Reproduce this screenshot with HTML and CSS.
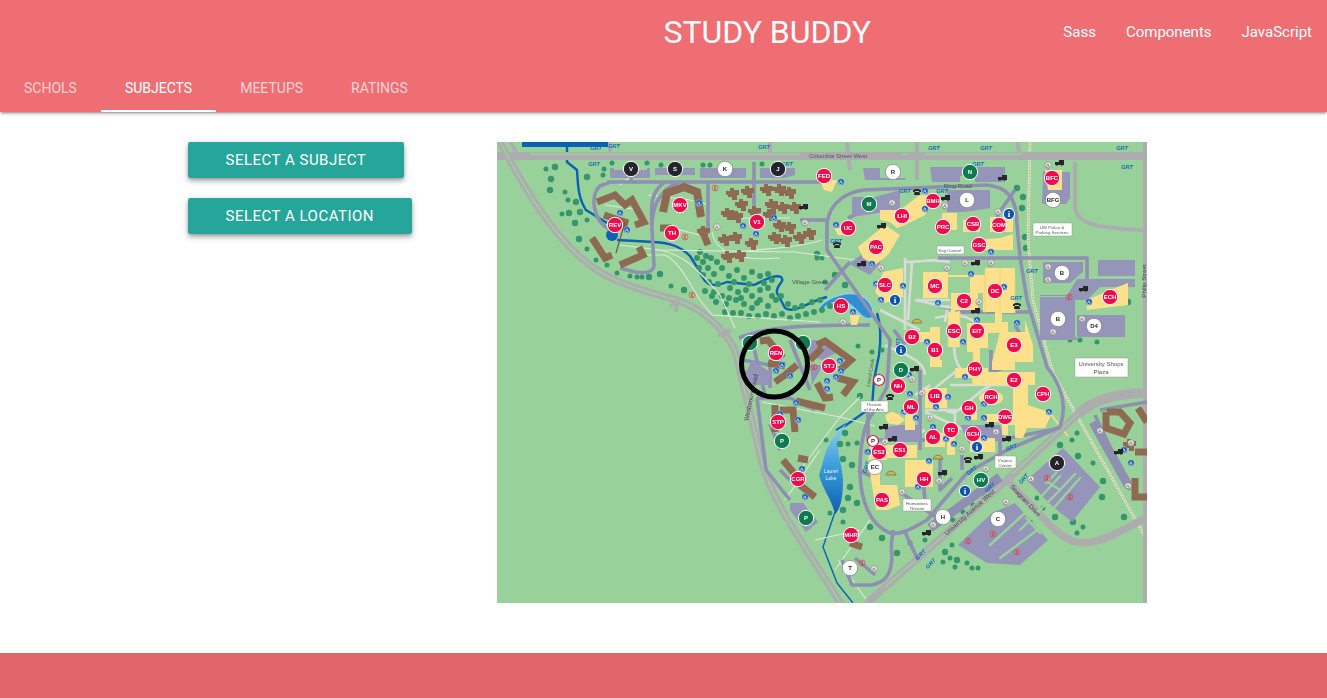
FILE: index.html
```html
<!DOCTYPE html>
<html lang="en">
<head>
<meta charset="utf-8">
<title>Study Buddy</title>
<link rel="stylesheet" href="styles.css">
</head>
<body>
<header class="topbar">
  <div class="brand-row">
    <div class="spacer"></div>
    <div class="brand-side">
      <a class="brand">STUDY BUDDY</a>
      <nav class="links"><a>Sass</a><a>Components</a><a>JavaScript</a></nav>
    </div>
  </div>
  <div class="tabs">
    <a class="tab">SCHOLS</a>
    <a class="tab active">SUBJECTS</a>
    <a class="tab">MEETUPS</a>
    <a class="tab">RATINGS</a>
  </div>
</header>
<main class="content">
  <div class="actions">
    <a class="btn">SELECT A SUBJECT</a>
    <a class="btn">SELECT A LOCATION</a>
  </div>
  <svg class="map" viewBox="497 142 650 461" width="650" height="461" role="img" aria-label="Campus map">
    <defs>
      <linearGradient id="lake" x1="0" y1="0" x2="0" y2="1"><stop offset="0" stop-color="#8ed0ee"/><stop offset=".45" stop-color="#3f9fdc"/><stop offset="1" stop-color="#0b5fb0"/></linearGradient>
      <g id="w"><circle r="3.2" class="w-bg"/><path class="w-g" d="M-.3-1.6V.5H1L1.5 1.7M-.3-.6H1M-.9-.2A1.4 1.4 0 1 0 .9 1.4"/></g>
      <g id="a"><circle r="3.2" class="a-bg"/><path class="a-g" d="M-.3-1.6V.5H1L1.5 1.7M-.3-.6H1M-.9-.2A1.4 1.4 0 1 0 .9 1.4"/></g>
      <path id="t" class="blk" d="M-5 2V-1H-1V-3H4V2H3A1.2 1.2 0 0 1 .8 2H-2A1.2 1.2 0 0 1-4.2 2Z"/>
      <path id="f" class="blk" d="M-4-1.5C-3-3.5 3-3.5 4-1.5V0H2V-1H-2V0H-4ZM-2.5 0H2.5L3 3H-3Z"/>
      <g id="p"><circle r="3" class="p-c"/><path class="p-g" d="M1-1.8C-.8-1.6-.9 1.5 1 1.8"/></g>
      <path id="o" class="dome" d="M-5 2C-4-3 4-3 5 2Z"/>
      <path id="h" class="brown" d="M-7-3H-3V-6H1V-4H6V1H4V6H-1V3H-5V1H-7Z"/>
    </defs>

    <rect class="grass" x="497" y="142" width="650" height="461"/>

    <!-- water -->
    <rect class="water" x="522" y="142" width="88" height="5"/>
    <path class="river" d="M567 147V162L577 170C578 185 578 198 586 210L607 223"/>
    <circle class="water" cx="612" cy="235" r="6"/>
    <path class="river" d="M617 240L654 242C670 243 680 246 690 256L700 272C705 285 712 288 727 282L754 285C765 280 775 274 781 277C786 282 775 285 777 293L785 308C795 314 805 303 827 297"/>
    <path class="pond" d="M820 306C830 296 850 290 862 296C872 302 875 312 872 318C862 322 858 308 846 302C838 300 828 303 822 310Z"/>
    <path class="river" d="M877 313C881 325 881 340 879 355L874 380L872 407L842 428"/>
    <path class="lakeline" d="M846 424L836 430"/>
    <path class="lake" d="M846 424C832 436 826 448 823 462L819 475C823 490 832 500 835 514C842 508 843 492 843 480C842 462 835 450 840 438Z"/>
    <path class="river thin" d="M835 512L823 547L837 583L853 603"/>

    <!-- trees -->
    <path class="tree t1" d="M555 167h0M551 179h0M550 190h0M576 202h0M569 213h0M580 212h0M575 223h0M587 177h0M579 239h0M649 277h0M660 274h0M684 290h0M817 254h0M1128 302h0M1023 197h0M1017 188h0M1022 208h0M1025 237h0M1026 248h0M845 433h0M840 444h0M843 459h0M852 465h0M850 487h0M848 498h0M857 503h0M870 527h0M882 538h0M897 553h0M843 510h0M945 552h0M957 560h0M1060 445h0M1103 481h0M1102 497h0M1078 456h0M1055 517h0M1073 522h0M1124 517h0M860 396h0M835 275h0M845 285h0"/>
    <path class="tree t2" d="M546 169h0M565 192h0M568 200h0M562 214h0M587 220h0M587 249h0M596 260h0M607 265h0M617 273h0M630 276h0M637 277h0M642 277h0M603 175h0M604 169h0M612 163h0M661 165h0M703 165h0M710 165h0M762 164h0M647 163h0M671 286h0M817 258h0M822 258h0M848 444h0M857 443h0M826 440h0M830 513h0M843 522h0M910 543h0M925 540h0M950 558h0M943 562h0M955 567h0M967 563h0M972 568h0M978 568h0M952 545h0M953 520h0M963 512h0M973 505h0M985 497h0M997 490h0M1072 440h0M1077 433h0M1093 463h0M1077 533h0M1083 527h0M1037 498h0M1043 508h0M1030 521h0M1070 340h0M1080 340h0M1097 342h0M825 282h0M858 346h0M872 352h0M882 350h0"/>
    <path class="tree t3" d="M700 252h0M706 256h0M697 258h0M703 262h0M711 258h0M717 262h0M699 268h0M708 268h0M714 274h0M722 268h0M729 276h0M737 270h0M744 278h0M752 272h0M760 276h0M768 274h0M772 280h0M703 275h0M709 282h0M718 284h0M705 291h0M714 292h0M722 296h0M730 288h0M738 292h0M746 290h0M752 296h0M760 290h0M768 288h0M776 300h0M716 302h0M726 304h0M736 300h0M744 304h0M752 308h0M760 300h0M768 306h0M781 296h0M733 313h0M741 313h0M749 316h0M758 316h0M766 314h0M774 316h0M782 314h0M790 318h0M798 316h0M806 314h0M814 312h0M822 310h0M830 306h0M802 306h0M812 302h0M820 300h0M729 298h0M741 298h0M757 303h0M772 296h0M788 304h0M795 308h0M725 312h0M712 296h0M734 282h0M749 284h0M764 283h0"/>

    <!-- walks -->
    <path class="walk" d="M620 185L640 170M605 205L640 210M620 245L660 250C680 255 690 260 720 295L735 328M655 250L795 252L870 262M712 232C715 250 735 262 780 258M740 252C760 248 790 250 822 240M728 218H790M648 195L690 200L710 205M660 225L700 235M640 255H665C680 262 690 285 700 300L712 315L820 322M762 402L840 417M840 417L800 470M840 417L860 397M840 417L875 426M820 450L785 500M838 560L868 602M860 530L815 540M870 520L835 570"/>
    <path class="plaza" d="M905 258V330M905 262C925 262 930 258 950 262M935 318C950 315 965 310 985 330M915 300L960 310C955 330 950 355 960 368L935 388M880 310L920 330M930 385L915 395M950 385H1010M925 412L965 430M950 430V445M945 410C960 420 960 400 1000 380M885 345C905 355 925 360 925 375M912 262L908 320M918 300L950 300M948 305L945 322M925 410H955V432M905 440L925 430M1004 310L1020 306"/>

    <!-- rail -->
    <path class="rail-bg" d="M1030 142L1028 240L1033 300L1053 373L1085 430L1147 540"/>
    <path class="rail" d="M1030 142L1028 240L1033 300L1053 373L1085 430L1147 540"/>
    <path class="yellow-walk" d="M1049 412L1068 436"/>

    <!-- roads -->
    <path class="road mid" d="M497 156H1147"/>
    <path class="road" d="M510 142L521 160M770 142V156M610 142V156M847 142L850 170M917 142V180M1017 142L1020 156M1145 142V603"/>
    <path class="med" d="M530 154H800M902 154H908M925 154H1023"/>
    <path class="road wide" d="M500 142C520 180 545 225 580 257C600 275 620 285 677 300C700 308 722 325 735 350L745 392L762 462C770 495 790 525 842 605"/>
    <path class="med" d="M500 142C520 180 545 225 580 257C600 275 620 285 677 300C700 308 722 325 735 350L745 392L762 462C770 495 790 525 842 605"/>
    <path class="road wide" d="M867 603L1007 480L1078 414M1007 480L1050 525C1075 550 1090 550 1147 517"/>
    <path class="road fat" d="M1078 414C1098 396 1125 393 1147 393"/>
    <path class="med" d="M885 587L1000 486M1012 474L1078 414"/>
    <path class="road" d="M670 306L677 302L676 312M722 338L730 330L718 336"/>
    <path class="road" d="M1075 162V205C1075 222 1090 228 1143 230"/>

    <!-- lots and purple roads -->
    <path class="lane" d="M827 223C830 200 850 192 863 190L987 185C1005 187 1017 195 1017 225L1020 257L1027 300L1047 367C1065 390 1066 410 1060 427L1007 450L967 473L927 520C910 530 900 535 890 533C870 525 860 500 860 470C860 440 866 420 873 413L887 387L890 340L853 287L827 250Z"/>
    <path class="lane" d="M610 182L600 186C590 195 592 220 610 230M607 182H828M665 182C650 192 651 205 652 230L654 265C654 272 645 274 635 272L620 268M679 182C660 190 651 205 652 230M631 163V182M708 182V228M754 162V212M800 220H828M938 258H1087V280M850 262L825 290M870 208L848 218M894 330L905 345M858 470L880 480M923 482L925 500M900 492L940 520M864 452H895M905 440H925M960 312H1030M1015 325L1021 336M1003 368L991 372V350M1015 190L998 214V220H1010M1060 428L1000 440V462M868 408V440H895M920 370V450M940 458V490L952 478M962 455V470M1095 415L1130 490M1100 410L1147 402"/>
    <path class="lane fat" d="M930 528L1000 477M1093 422L1128 485"/>
    <path class="lane" d="M757 398H790L815 410M757 398L766 470L790 500M770 424L780 450M780 470L790 480M739 338C770 325 820 325 870 325M752 340L765 395M790 340L810 390M742 360L770 365L770 388M762 372H745"/>
    <path class="lane" d="M842 560L852 585H872C885 582 892 575 892 555C890 545 893 535 893 530M855 558L875 575M905 532L918 560"/>
    <path class="lot" d="M610 168H614V170H647V168H650V178H610ZM655 168H695V175H655ZM700 168H746V178H700ZM760 168H795V175L785 178H760ZM863 168H880V178H905V168V180H865ZM930 167H1005V182H975V176H960V182H932ZM947 190H990V208L965 212H947ZM852 197H875L900 190V217H885V212L852 217ZM1043 172L1049 168V190H1062V172H1070V198L1066 204H1042ZM1043 262H1083V272L1070 283H1043ZM1098 260H1135V276H1098ZM1077 279H1135V287H1100L1087 300H1075L1070 296H1040V337H1077V315H1125V337H1077V340H1040ZM1040 295H1075V340H1040ZM1080 318H1124V336H1080ZM790 503H803L818 522L806 532L790 510ZM1027 480L1063 448L1100 487L1072 522L1050 504ZM958 545L992 513L1015 503L1048 540L1020 565L987 563ZM849 264L867 250L881 262L870 275ZM935 308L950 310L975 312H1032L1032 312ZM812 340L830 342L838 352L822 360L808 355ZM810 365H823L812 385ZM746 372L752 360L770 372V385H745ZM900 425H920V442H885V427ZM960 425H1000L1005 440L970 445ZM1040 297H1075V339H1040Z"/>
    <path class="strip" d="M1046 483L1056 473M1020 530L1056 494L1075 474M1052 510L1080 478M1048 482L1060 490M1000 558L1040 528M990 545L1026 512M1040 533L1026 518M1040 498L1060 476M978 520L1000 505"/>

    <!-- yellow buildings -->
    <path class="yel" d="M820 180H837L832 192L824 190ZM880 210H900L920 195H935L925 215L905 225L897 228L890 222L880 220ZM858 247L885 225L900 235L888 255L875 265L863 258ZM875 292L883 272L903 268V297L885 303ZM942 213H957V230H942ZM963 220H980V232H963ZM990 217H1013V232H990ZM973 250V240L1000 238L1013 234V250ZM1045 170H1062V190H1048ZM1087 300L1110 290L1128 283V305L1087 310ZM923 272H948V275H985V268H1015V277H1015V313H1002V322H1008V332L995 333H988V348H980V368H988V372H1035V385H1028V405L1052 413L1045 428H1027L1023 438H1015V425H1008V435H1002V422H985V414H1013V385H972V378H955L955 368H973V352H967V323H995L995 312H983V293H978V310H955V312H960V347H948V312H951V293H970V277H948V298H923ZM1000 332H1025V320L1033 345V362H1015V370H992V362H992Z"/>
    <path class="yel" d="M907 332H930V327H940V360H942V367H930V342H907ZM925 388H947V408H925ZM925 433H945V447H925ZM947 433H955V455H947ZM965 412H977V420H965ZM970 438H995V452H970ZM905 405H915V430H905ZM885 415L898 414L905 420L898 425L888 423ZM870 445H917V458H887V460H868ZM905 460H933V487H905V487ZM870 473H880V485H897L900 505L888 510H876ZM834 228H852L845 235H838ZM850 315H860L857 325H851Z"/>
    <ellipse class="yel" cx="991" cy="398" rx="12" ry="7"/>
    <circle class="yel" cx="892" cy="418" r="6"/>
    <path class="yel-edge" d="M985 268V313M1000 268V313M1015 277V313M948 312V347M960 312V347M973 352V385"/>

    <!-- brown buildings -->
    <path class="bline" d="M597 202L615 195L625 205L632 200L644 222L635 225M604 215L625 222L623 230M592 238L605 258L612 255M620 265L643 255L639 247M660 228H672M701 228L708 245"/>
    <path class="bline big" d="M663 212L667 193L684 187L697 192L701 217"/>
    <path class="bline" d="M760 341L768 340L783 358M768 363L785 366M797 365L785 375L775 382M817 345L825 341L851 360L840 370M810 360L822 348M817 383L825 398L833 397M838 378L853 382L843 395M796 401L825 408M775 405V432M780 410H793L795 432M798 458L808 460M783 460L797 477M800 485L815 497M850 543L862 547"/>
    <path class="bline" d="M1107 412H1120L1130 423L1124 434L1106 428V412M1138 408L1147 422M1135 478V497H1147M1135 452H1147"/>
    <path class="bthin" d="M625 222L616 253"/>
    <use href="#h" x="733" y="194"/><use href="#h" x="748" y="192"/><use href="#h" x="742" y="205"/><use href="#h" x="728" y="214"/><use href="#h" x="737" y="217"/><use href="#h" x="704" y="232"/><use href="#h" x="725" y="240"/><use href="#h" x="736" y="238"/><use href="#h" x="728" y="257"/><use href="#h" x="740" y="256"/><use href="#h" x="752" y="244"/><use href="#h" x="767" y="190"/><use href="#h" x="780" y="190"/><use href="#h" x="790" y="193"/><use href="#h" x="772" y="205"/><use href="#h" x="783" y="208"/><use href="#h" x="795" y="208"/><use href="#h" x="780" y="226"/><use href="#h" x="790" y="228"/><use href="#h" x="775" y="238"/><use href="#h" x="786" y="241"/><use href="#h" x="800" y="238"/><use href="#h" x="770" y="215"/><use href="#h" x="755" y="212"/><use href="#h" x="810" y="234"/>
    <use href="#h" x="1130" y="445"/>

    <!-- small icons -->
    <g class="icons">
      <use href="#w" x="699" y="203"/><use href="#w" x="620" y="213"/><use href="#w" x="627" y="230"/><use href="#w" x="743" y="226"/><use href="#w" x="756" y="234"/><use href="#w" x="774" y="218"/><use href="#w" x="841" y="182"/><use href="#w" x="925" y="191"/><use href="#w" x="925" y="209"/><use href="#w" x="836" y="225"/><use href="#w" x="872" y="264"/><use href="#w" x="876" y="284"/><use href="#w" x="903" y="286"/><use href="#w" x="881" y="300"/><use href="#w" x="938" y="303"/><use href="#w" x="971" y="274"/><use href="#w" x="1004" y="287"/><use href="#w" x="991" y="252"/><use href="#w" x="1089" y="302"/><use href="#w" x="853" y="312"/><use href="#w" x="1017" y="323"/><use href="#w" x="977" y="320"/><use href="#w" x="963" y="342"/><use href="#w" x="927" y="342"/><use href="#w" x="840" y="361"/><use href="#w" x="841" y="371"/><use href="#w" x="965" y="377"/><use href="#w" x="836" y="377"/><use href="#w" x="827" y="381"/><use href="#w" x="827" y="389"/><use href="#w" x="796" y="403"/><use href="#w" x="780" y="414"/><use href="#w" x="798" y="420"/><use href="#w" x="802" y="469"/><use href="#w" x="805" y="497"/><use href="#w" x="910" y="394"/><use href="#w" x="936" y="407"/><use href="#w" x="948" y="397"/><use href="#w" x="904" y="412"/><use href="#w" x="916" y="418"/><use href="#w" x="965" y="405"/><use href="#w" x="984" y="404"/><use href="#w" x="984" y="418"/><use href="#w" x="968" y="418"/><use href="#w" x="933" y="427"/><use href="#w" x="946" y="439"/><use href="#w" x="954" y="444"/><use href="#w" x="984" y="438"/><use href="#w" x="868" y="452"/><use href="#w" x="929" y="461"/><use href="#w" x="918" y="487"/><use href="#w" x="1049" y="412"/><use href="#w" x="782" y="365"/><use href="#w" x="776" y="371"/><use href="#w" x="790" y="376"/><use href="#w" x="909" y="375"/><use href="#w" x="1124" y="450"/><use href="#w" x="1131" y="463"/>
      <use href="#a" x="717" y="227"/><use href="#a" x="805" y="223"/><use href="#a" x="892" y="203"/><use href="#a" x="945" y="206"/><use href="#a" x="998" y="212"/><use href="#a" x="1048" y="165"/><use href="#a" x="881" y="268"/><use href="#a" x="947" y="268"/><use href="#a" x="965" y="263"/><use href="#a" x="991" y="263"/><use href="#a" x="1048" y="267"/><use href="#a" x="1048" y="280"/><use href="#a" x="979" y="302"/><use href="#a" x="1082" y="319"/><use href="#a" x="1053" y="332"/><use href="#a" x="843" y="322"/><use href="#a" x="912" y="379"/><use href="#a" x="922" y="393"/><use href="#a" x="930" y="418"/><use href="#a" x="885" y="442"/><use href="#a" x="962" y="449"/><use href="#a" x="996" y="432"/><use href="#a" x="939" y="481"/><use href="#a" x="902" y="492"/><use href="#a" x="986" y="469"/><use href="#a" x="1006" y="502"/><use href="#a" x="1031" y="479"/><use href="#a" x="933" y="525"/><use href="#a" x="874" y="569"/><use href="#a" x="1100" y="431"/><use href="#a" x="1131" y="443"/><use href="#a" x="1128" y="486"/>
      <use href="#t" x="1060" y="163"/><use href="#t" x="1003" y="178"/><use href="#t" x="946" y="198"/><use href="#t" x="882" y="226"/><use href="#t" x="862" y="264"/><use href="#t" x="976" y="263"/><use href="#t" x="1084" y="289"/><use href="#t" x="976" y="311"/><use href="#t" x="915" y="369"/><use href="#t" x="804" y="207"/><use href="#t" x="884" y="427"/><use href="#t" x="893" y="439"/><use href="#t" x="943" y="473"/><use href="#t" x="927" y="533"/><use href="#t" x="979" y="457"/><use href="#t" x="990" y="425"/><use href="#t" x="1007" y="439"/><use href="#t" x="1119" y="452"/>
      <use href="#f" x="917" y="192"/><use href="#f" x="837" y="245"/><use href="#f" x="1017" y="306"/><use href="#f" x="890" y="397"/><use href="#f" x="968" y="460"/>
      <use href="#p" x="715" y="188"/><use href="#p" x="685" y="237"/><use href="#p" x="692" y="295"/><use href="#p" x="814" y="367"/><use href="#p" x="1069" y="297"/><use href="#p" x="1047" y="478"/><use href="#p" x="1070" y="497"/><use href="#p" x="993" y="534"/><use href="#p" x="968" y="541"/><use href="#p" x="1017" y="552"/><use href="#p" x="862" y="563"/>
      <use href="#o" x="917" y="321"/><use href="#o" x="938" y="457"/><use href="#o" x="891" y="473"/>
    </g>

    <!-- notices -->
    <rect class="note" x="1033" y="223" width="39" height="13"/>
    <rect class="note" x="937" y="246" width="27" height="8"/>
    <rect class="note" x="1075" y="358" width="53" height="19"/>
    <rect class="note" x="861" y="401" width="27" height="11"/>
    <rect class="note" x="995" y="456" width="21" height="12"/>
    <rect class="note" x="903" y="499" width="28" height="12"/>
    <g class="lbl">
      <text x="1052" y="229">UW Police &amp;</text><text x="1052" y="234">Parking Services</text>
      <text x="950" y="252">Key Control</text>
      <text class="lg" x="1101" y="366">University Shops</text><text class="lg" x="1101" y="374">Plaza</text>
      <text x="874" y="406">Theatre</text><text x="874" y="411">of the Arts</text>
      <text x="1005" y="462">Visitors</text><text x="1005" y="467">Centre</text>
      <text x="917" y="505">Humanities</text><text x="917" y="510">Theatre</text>
    </g>
    <g class="names">
      <text x="810" y="284">Village Green</text>
      <text x="838" y="158">Columbia Street West</text>
      <text x="958" y="188">Ring Road</text>
      <text class="sm wh" x="831" y="473">Laurel</text><text class="sm wh" x="831" y="480">Lake</text>
      <text transform="translate(1146 281) rotate(-90)" class="ln">Philip Street</text>
      <text transform="translate(753 398) rotate(-78)" class="ln">Westmount Road</text>
      <text transform="translate(971 514) rotate(-42)" class="ln">University Avenue West</text>
      <text transform="translate(1024 502) rotate(47)" class="ln">Seagram Drive</text>
      <text transform="translate(872 373) rotate(-80)" class="sm">Laurel Creek</text>
    </g>
    <g class="grt">
      <text x="596" y="150">GRT</text><text x="764" y="149">GRT</text><text x="594" y="166">GRT</text><text x="787" y="166">GRT</text><text x="614" y="148">GRT</text><text x="934" y="150">GRT</text><text x="986" y="150">GRT</text><text x="1122" y="150">GRT</text><text x="978" y="166">GRT</text><text x="1127" y="169">GRT</text><text x="905" y="193">GRT</text><text x="942" y="193">GRT</text><text x="836" y="243">GRT</text><text x="1032" y="273">GRT</text><text x="1016" y="300">GRT</text>
      <text transform="translate(900 344) rotate(-90)">GRT</text><text transform="translate(868 468) rotate(-70)">GRT</text><text transform="translate(973 472) rotate(-40)">GRT</text><text transform="translate(1012 449) rotate(-20)">GRT</text><text transform="translate(991 489) rotate(-40)">GRT</text><text transform="translate(1025 480) rotate(-50)">GRT</text><text transform="translate(922 556) rotate(-45)">GRT</text><text transform="translate(932 565) rotate(-45)">GRT</text>
    </g>

    <!-- pins -->
    <g class="pins red">
      <circle cx="615" cy="225" r="7.3"/><text x="615" y="227">REV</text>
      <circle cx="680" cy="205" r="7.3"/><text x="680" y="207">MKV</text>
      <circle cx="672" cy="233" r="7.3"/><text x="672" y="235">TH</text>
      <circle cx="757" cy="222" r="7.3"/><text x="757" y="224">V1</text>
      <circle cx="824" cy="176" r="7.3"/><text x="824" y="178">FED</text>
      <circle cx="848" cy="228" r="7.3"/><text x="848" y="230">UC</text>
      <circle cx="933" cy="201" r="7.3"/><text x="933" y="203">BMH</text>
      <circle cx="902" cy="216" r="7.3"/><text x="902" y="218">LHI</text>
      <circle cx="876" cy="247" r="7.3"/><text x="876" y="249">PAC</text>
      <circle cx="943" cy="227" r="7.3"/><text x="943" y="229">PRC</text>
      <circle cx="973" cy="224" r="7.3"/><text x="973" y="226">CSB</text>
      <circle cx="999" cy="225" r="7.3"/><text x="999" y="227">COM</text>
      <circle cx="979" cy="245" r="7.3"/><text x="979" y="247">GSC</text>
      <circle cx="885" cy="285" r="7.3"/><text x="885" y="287">SLC</text>
      <circle cx="935" cy="286" r="7.3"/><text x="935" y="288">MC</text>
      <circle cx="995" cy="291" r="7.3"/><text x="995" y="293">DC</text>
      <circle cx="964" cy="301" r="7.3"/><text x="964" y="303">C2</text>
      <circle cx="841" cy="306" r="7.3"/><text x="841" y="308">HS</text>
      <circle cx="954" cy="331" r="7.3"/><text x="954" y="333">ESC</text>
      <circle cx="977" cy="331" r="7.3"/><text x="977" y="333">EIT</text>
      <circle cx="912" cy="337" r="7.3"/><text x="912" y="339">B2</text>
      <circle cx="935" cy="350" r="7.3"/><text x="935" y="352">B1</text>
      <circle cx="1014" cy="345" r="7.3"/><text x="1014" y="347">E3</text>
      <circle cx="776" cy="353" r="7.3"/><text x="776" y="355">REN</text>
      <circle cx="829" cy="366" r="7.3"/><text x="829" y="368">STJ</text>
      <circle cx="975" cy="369" r="7.3"/><text x="975" y="371">PHY</text>
      <circle cx="1014" cy="380" r="7.3"/><text x="1014" y="382">E2</text>
      <circle cx="898" cy="386" r="7.3"/><text x="898" y="388">NH</text>
      <circle cx="935" cy="396" r="7.3"/><text x="935" y="398">LIB</text>
      <circle cx="991" cy="397" r="7.3"/><text x="991" y="399">RCH</text>
      <circle cx="1043" cy="394" r="7.3"/><text x="1043" y="396">CPH</text>
      <circle cx="911" cy="407" r="7.3"/><text x="911" y="409">ML</text>
      <circle cx="969" cy="408" r="7.3"/><text x="969" y="410">GH</text>
      <circle cx="1005" cy="417" r="7.3"/><text x="1005" y="419">DWE</text>
      <circle cx="778" cy="422" r="7.3"/><text x="778" y="424">STP</text>
      <circle cx="951" cy="430" r="7.3"/><text x="951" y="432">TC</text>
      <circle cx="933" cy="437" r="7.3"/><text x="933" y="439">AL</text>
      <circle cx="973" cy="434" r="7.3"/><text x="973" y="436">SCH</text>
      <circle cx="879" cy="452" r="7.3"/><text x="879" y="454">ES2</text>
      <circle cx="900" cy="450" r="7.3"/><text x="900" y="452">ES1</text>
      <circle cx="924" cy="479" r="7.3"/><text x="924" y="481">HH</text>
      <circle cx="798" cy="479" r="7.3"/><text x="798" y="481">CGR</text>
      <circle cx="882" cy="500" r="7.3"/><text x="882" y="502">PAS</text>
      <circle cx="851" cy="535" r="7.3"/><text x="851" y="537">MHR</text>
      <circle cx="1052" cy="178" r="7.3"/><text x="1052" y="180">BFC</text>
      <circle cx="1110" cy="297" r="7.3"/><text x="1110" y="299">ECH</text>
    </g>
    <g class="pins green">
      <circle cx="750" cy="343" r="7"/><circle cx="803" cy="343" r="7"/>
      <circle cx="970" cy="172" r="7.3"/><text x="970" y="174">N</text>
      <circle cx="869" cy="204" r="7.3"/><text x="869" y="206">M</text>
      <circle cx="901" cy="370" r="7.3"/><text x="901" y="372">D</text>
      <circle cx="782" cy="441" r="7.3"/><text x="782" y="443">P</text>
      <circle cx="806" cy="518" r="7.3"/><text x="806" y="520">P</text>
      <circle cx="981" cy="480" r="7.3"/><text x="981" y="482">HV</text>
    </g>
    <g class="pins white">
      <circle cx="893" cy="172" r="7.3"/><text x="893" y="174">R</text>
      <circle cx="967" cy="200" r="7.3"/><text x="967" y="202">L</text>
      <circle cx="725" cy="169" r="7.3"/><text x="725" y="171">K</text>
      <circle cx="1053" cy="200" r="7.3"/><text x="1053" y="202">BFG</text>
      <circle cx="1062" cy="273" r="7.3"/><text x="1062" y="275">B</text>
      <circle cx="1058" cy="319" r="7.3"/><text x="1058" y="321">B</text>
      <circle cx="1094" cy="326" r="7.3"/><text x="1094" y="328">D4</text>
      <circle cx="875" cy="467" r="7.3"/><text x="875" y="469">EC</text>
      <circle cx="943" cy="517" r="7.3"/><text x="943" y="519">H</text>
      <circle cx="998" cy="519" r="7.3"/><text x="998" y="521">C</text>
      <circle cx="850" cy="568" r="7.3"/><text x="850" y="570">T</text>
    </g>
    <g class="pins ringed">
      <circle cx="879" cy="380" r="5.5"/><text x="879" y="382">P</text>
      <circle cx="873" cy="441" r="5.5"/><text x="873" y="443">P</text>
    </g>
    <g class="pins black">
      <circle cx="631" cy="169" r="7.3"/><text x="631" y="171">V</text>
      <circle cx="675" cy="169" r="7.3"/><text x="675" y="171">S</text>
      <circle cx="778" cy="169" r="7.3"/><text x="778" y="171">J</text>
      <circle cx="1057" cy="463" r="7.3"/><text x="1057" y="465">A</text>
    </g>
    <g class="pins info">
      <circle cx="1009" cy="214" r="6"/><text x="1009" y="217">i</text>
      <circle cx="895" cy="300" r="6"/><text x="895" y="303">i</text>
      <circle cx="901" cy="350" r="6"/><text x="901" y="353">i</text>
      <circle cx="977" cy="447" r="4.5"/><text x="977" y="450">i</text>
      <circle cx="965" cy="491" r="4.5"/><text x="965" y="494">i</text>
    </g>
    <circle class="ring" cx="774.5" cy="364" r="33"/>
  </svg>
</main>
<footer class="footer"></footer>
</body>
</html>
```

FILE: styles.css
```css
* { box-sizing: border-box; }
html { font-size: 15px; }
body { margin: 0; font-family: Roboto, "Liberation Sans", sans-serif; color: #fff; background: #fff; }
a { color: inherit; text-decoration: none; }

.topbar { background: #ee6e73; box-shadow: 0 2px 2px 0 rgba(0,0,0,.14), 0 3px 1px -2px rgba(0,0,0,.12), 0 1px 5px 0 rgba(0,0,0,.2); position: relative; z-index: 1; }
.brand-row { display: grid; grid-template-columns: 1fr 1fr; height: 64px; }
.brand-side { display: flex; justify-content: space-between; align-items: center; }
.brand { font-size: 32px; line-height: 64px; }
.links { display: flex; }
.links a { padding: 0 15px; line-height: 64px; font-size: 15px; }

.tabs { display: flex; height: 48px; }
.tab { padding: 0 24px; line-height: 48px; font-size: 14px; color: rgba(255,255,255,.7); }
.tab.active { color: #fff; border-bottom: 2px solid #fff; }

.content { display: flex; align-items: flex-start; padding: 30px 0 50px 188px; }
.actions { display: flex; flex-direction: column; align-items: flex-start; gap: 20px; width: 309px; }
.btn { display: block; height: 36px; line-height: 36px; padding: 0 2.5rem; font-size: 1rem; letter-spacing: .5px; color: #fff; background: #26a69a; border-radius: 2px; box-shadow: 0 4px 5px 0 rgba(0,0,0,.14), 0 1px 10px 0 rgba(0,0,0,.12), 0 2px 4px -1px rgba(0,0,0,.3); }

.map { display: block; flex: none; filter: blur(.4px); font-family: "Liberation Sans", Arial, sans-serif; }
.footer { height: 45px; background: #e0656b; }

/* map surfaces */
.grass { fill: #98d29a; }
.water { fill: #0a62b4; }
.river { fill: none; stroke: #0a62b4; stroke-width: 2.4; stroke-linejoin: round; }
.river.thin { stroke-width: 1.4; }
.pond { fill: #2f8fd0; stroke: #8fd0ee; stroke-width: 1.5; }
.lake { fill: url(#lake); }
.lakeline { stroke: #0a62b4; stroke-width: 2; }
.tree { fill: none; stroke: #35966c; stroke-linecap: round; }
.t1 { stroke-width: 6.4; }
.t2 { stroke-width: 5; }
.t3 { stroke-width: 6; }
.walk { fill: none; stroke: #dde9d8; stroke-width: 1.1; }
.plaza { fill: none; stroke: #d9dcd6; stroke-width: 2.6; }
.rail-bg { fill: none; stroke: #dde9d2; stroke-width: 2.6; }
.rail { fill: none; stroke: #bca970; stroke-width: 1.4; stroke-dasharray: 1.4 1.4; }
.yellow-walk { stroke: #f2d98a; stroke-width: 2; }
.road { fill: none; stroke: #adadb0; stroke-width: 4; }
.road.mid { stroke-width: 8; }
.road.wide { stroke-width: 7.5; }
.road.fat { stroke-width: 10; }
.med { fill: none; stroke: #98d29a; stroke-width: 1.4; }
.lane { fill: none; stroke: #8f8fb2; stroke-width: 3.6; stroke-linejoin: round; }
.lane.fat { stroke-width: 9; }
.lot { fill: #9595b9; }
.strip { fill: none; stroke: #98d29a; stroke-width: 2.4; stroke-linecap: round; }
.yel { fill: #fde08c; }
.yel-edge { fill: none; stroke: #f3cd74; stroke-width: .8; }
.brown { fill: #8e6a52; }
.bline { fill: none; stroke: #8e6a52; stroke-width: 7; stroke-linejoin: miter; }
.bline.big { stroke-width: 8; }
.bthin { fill: none; stroke: #6f5a45; stroke-width: 1.2; }

/* map icons */
.w-bg { fill: #1159b0; stroke: #d8e8f5; stroke-width: .4; }
.w-g, .a-g { fill: none; stroke: #fff; stroke-width: .6; }
.a-bg { fill: #eeeeea; stroke: #777; stroke-width: .6; }
.a-g { stroke: #666; }
.blk { fill: #26262a; }
.p-c { fill: none; stroke: #e5303a; stroke-width: .6; }
.p-g { fill: none; stroke: #e5303a; stroke-width: 1.1; }
.dome { fill: #d9b63a; stroke: #444; stroke-width: .5; }
.note { fill: #fff; stroke: #999; stroke-width: .5; }

/* map text */
.lbl text { font-size: 4.4px; fill: #555; text-anchor: middle; }
.lbl .lg { font-size: 6px; }
.names text { font-size: 6px; fill: #4f5552; text-anchor: middle; }
.names .ln { fill: #3f3f44; font-size: 6.2px; }
.names .sm { font-size: 5px; }
.names .wh { fill: #e7f3fb; }
.grt text { font-size: 5.6px; font-weight: 700; font-style: italic; fill: #1468bb; text-anchor: middle; }
.pins text { font-size: 6px; font-weight: 700; text-anchor: middle; fill: #fff; }
.pins circle { r: 7.7px; stroke: #fff; stroke-width: 1; }
.red circle { fill: #ee0c4c; }
.green circle { fill: #0e7a4e; }
.white circle { fill: #fff; stroke: #555; stroke-width: .5; }
.white text { fill: #2a2a2a; }
.ringed circle { r: 5.5px; fill: #fff; stroke: #e3123f; stroke-width: 1.2; }
.ringed text { fill: #333; }
.black circle { fill: #24242a; }
.info circle { r: 5.6px; fill: #0d53ad; }
.info text { font-family: "Liberation Serif", serif; font-size: 9px; }
.ring { fill: none; stroke: #000; stroke-width: 5; }
```
